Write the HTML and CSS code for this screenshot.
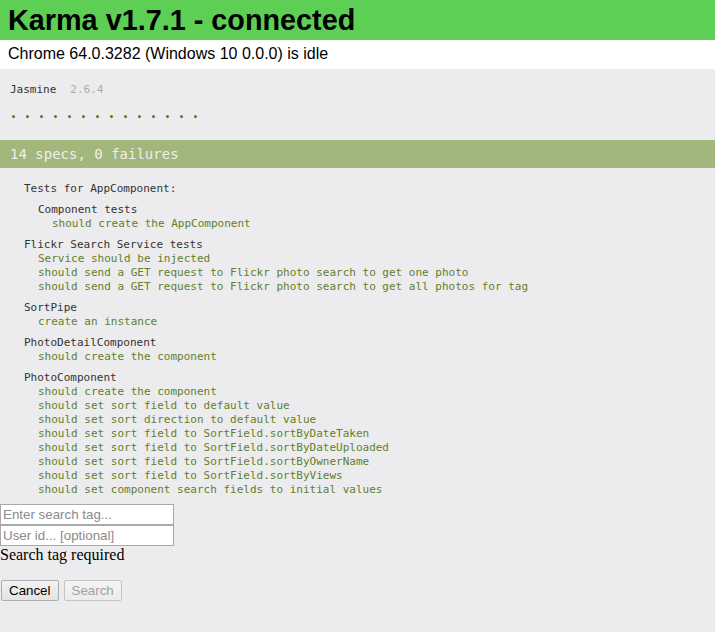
FILE: index.html
```html
<!DOCTYPE html>
<html>
<head>
<meta charset="utf-8">
<title>Karma</title>
<link rel="stylesheet" href="styles.css">
</head>
<body>
<div class="banner"><h1 class="title">Karma v1.7.1 - connected</h1></div>
<div class="browser">Chrome 64.0.3282 (Windows 10 0.0.0) is idle</div>
<div class="runner">
  <div class="reporter">
    <div class="jbanner"><span class="jtitle">Jasmine</span><span class="jversion">2.6.4</span></div>
    <ul class="symbols">
      <li></li><li></li><li></li><li></li><li></li><li></li><li></li>
      <li></li><li></li><li></li><li></li><li></li><li></li><li></li>
    </ul>
    <div class="bar">14 specs, 0 failures</div>
    <div class="summary">
      <div class="suite">
        <div class="suite-name">Tests for AppComponent:</div>
        <div class="suite">
          <div class="suite-name">Component tests</div>
          <ul class="specs">
            <li>should create the AppComponent</li>
          </ul>
        </div>
      </div>
      <div class="suite">
        <div class="suite-name">Flickr Search Service tests</div>
        <ul class="specs">
          <li>Service should be injected</li>
          <li>should send a GET request to Flickr photo search to get one photo</li>
          <li>should send a GET request to Flickr photo search to get all photos for tag</li>
        </ul>
      </div>
      <div class="suite">
        <div class="suite-name">SortPipe</div>
        <ul class="specs">
          <li>create an instance</li>
        </ul>
      </div>
      <div class="suite">
        <div class="suite-name">PhotoDetailComponent</div>
        <ul class="specs">
          <li>should create the component</li>
        </ul>
      </div>
      <div class="suite">
        <div class="suite-name">PhotoComponent</div>
        <ul class="specs">
          <li>should create the component</li>
          <li>should set sort field to default value</li>
          <li>should set sort direction to default value</li>
          <li>should set sort field to SortField.sortByDateTaken</li>
          <li>should set sort field to SortField.sortByDateUploaded</li>
          <li>should set sort field to SortField.sortByOwnerName</li>
          <li>should set sort field to SortField.sortByViews</li>
          <li>should set component search fields to initial values</li>
        </ul>
      </div>
    </div>
  </div>
  <form class="search">
    <input class="field" type="text" placeholder="Enter search tag...">
    <input class="field" type="text" placeholder="User id... [optional]">
    <div class="error">Search tag required</div>
    <div class="actions">
      <button class="btn" type="button">Cancel</button>
      <button class="btn" type="button" disabled>Search</button>
    </div>
  </form>
</div>
</body>
</html>
```

FILE: styles.css
```css
html, body {
  margin: 0;
  padding: 0;
  height: 100%;
}

body {
  font-family: "Liberation Sans", Arial, sans-serif;
  background: #ececee;
}

.banner {
  background: #5ccf54;
  height: 40px;
  padding: 0 8px;
}

.title {
  margin: 0;
  font-size: 28.8px;
  line-height: 40px;
  font-weight: bold;
  color: #000;
}

.browser {
  background: #fff;
  height: 29px;
  line-height: 28px;
  padding: 0 8px;
  font-size: 16px;
  color: #000;
}

.runner {
  background: #ececee;
}

.reporter {
  padding: 14px 0 0 0;
  font-family: "DejaVu Sans Mono", "Liberation Mono", monospace;
  font-size: 11px;
  line-height: 14px;
  color: #333;
}

.jbanner {
  padding: 0 10px;
  height: 14px;
}

.jtitle {
  color: #333;
}

.jversion {
  margin-left: 14px;
  color: #aaa;
}

.symbols {
  list-style: none;
  margin: 14px 0 0 0;
  padding: 0 10px;
  height: 10px;
  display: flex;
}

.symbols li {
  width: 14px;
  height: 10px;
  flex: none;
  position: relative;
}

.symbols li::before {
  content: "";
  position: absolute;
  left: 2px;
  top: 4px;
  width: 3px;
  height: 3px;
  border-radius: 50%;
  background: #5b7a12;
}

.bar {
  margin-top: 19px;
  background: #a2b77b;
  color: #eee;
  font-size: 14px;
  line-height: 28px;
  height: 28px;
  padding: 0 10px;
}

.summary {
  margin-top: 14px;
  padding: 0 10px;
}

.suite {
  margin: 7px 0 7px 14px;
}

.suite-name {
  color: #333;
}

.specs {
  list-style: none;
  margin: 0 0 0 14px;
  padding: 0;
  color: #62802a;
}

.search {
  margin: 0;
  padding-top: 0;
  padding-bottom: 40px;
}

.field {
  display: block;
  box-sizing: border-box;
  width: 174px;
  height: 21px;
  margin: 0;
  border: 1px solid #a9a9a9;
  padding: 1px 2px;
  background: #fff;
  font-family: "Liberation Sans", Arial, sans-serif;
  font-size: 13.33px;
  color: #000;
  outline: none;
}

.field::placeholder {
  color: #8a8a8a;
}

.error {
  font-family: "Liberation Serif", "Times New Roman", serif;
  font-size: 16px;
  line-height: 18px;
  color: #000;
}

.actions {
  margin-top: 16px;
  padding-left: 1px;
  display: flex;
  gap: 5px;
}

.btn {
  box-sizing: border-box;
  height: 21px;
  margin: 0;
  padding: 0 7px;
  border: 1px solid #adadad;
  border-radius: 2px;
  background: linear-gradient(#f3f3f3, #e3e3e3);
  font-family: "Liberation Sans", Arial, sans-serif;
  font-size: 13.33px;
  color: #000;
}

.btn:disabled {
  color: #a0a0a0;
  border-color: #c4c4c4;
  background: linear-gradient(#f4f4f4, #ebebeb);
}
```
